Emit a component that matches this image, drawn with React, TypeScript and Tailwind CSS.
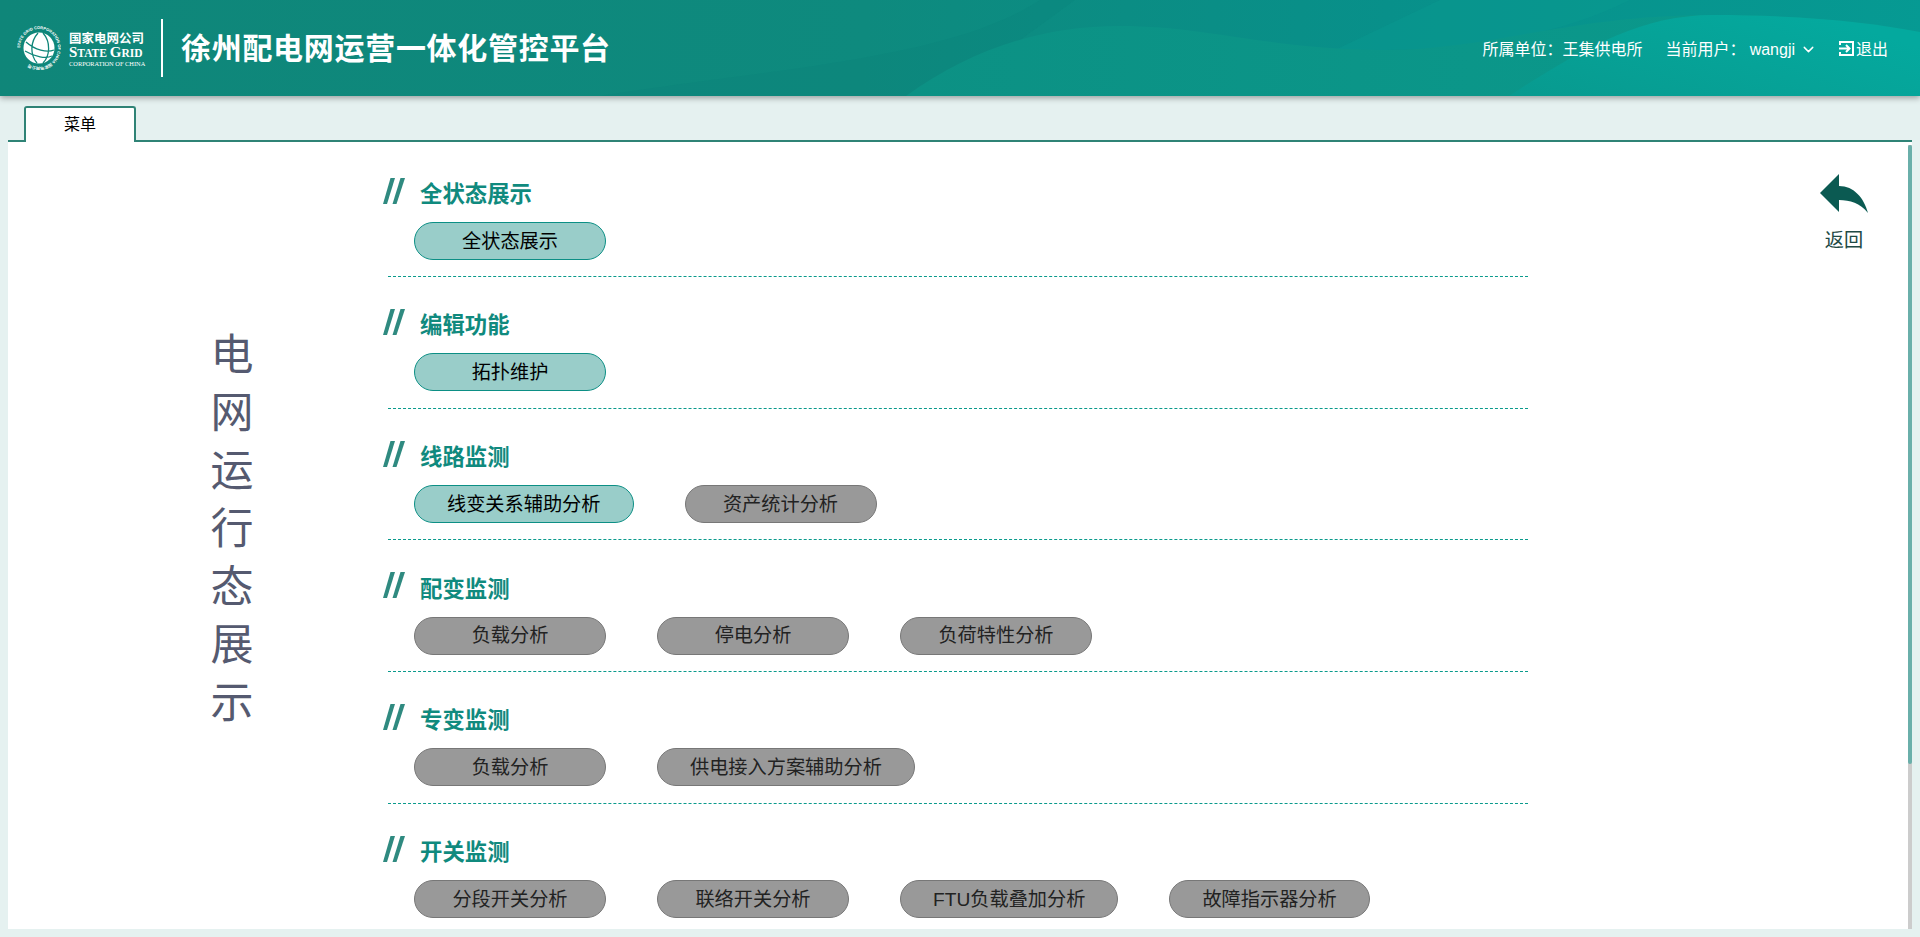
import React from 'react';
import { ChevronDown } from 'lucide-react';

type Item = { label: string; active?: boolean };
type Group = { title: string; items: Item[] };

const groups: Group[] = [
  { title: '全状态展示', items: [{ label: '全状态展示', active: true }] },
  { title: '编辑功能', items: [{ label: '拓扑维护', active: true }] },
  { title: '线路监测', items: [{ label: '线变关系辅助分析', active: true }, { label: '资产统计分析' }] },
  { title: '配变监测', items: [{ label: '负载分析' }, { label: '停电分析' }, { label: '负荷特性分析' }] },
  { title: '专变监测', items: [{ label: '负载分析' }, { label: '供电接入方案辅助分析' }] },
  { title: '开关监测', items: [{ label: '分段开关分析' }, { label: '联络开关分析' }, { label: 'FTU负载叠加分析' }, { label: '故障指示器分析' }] },
];

function HeaderWaves() {
  return (
    <svg className="absolute inset-0 h-full w-full" viewBox="0 0 1920 96" preserveAspectRatio="none">
      <defs>
        <linearGradient id="waveA" x1="0" x2="1" y1="0" y2="0">
          <stop offset="0" stopColor="#0c9184" />
          <stop offset="1" stopColor="#0a9a8d" />
        </linearGradient>
        <linearGradient id="waveB" x1="0" x2="1" y1="1" y2="0.4">
          <stop offset="0" stopColor="#089a8f" />
          <stop offset="0.6" stopColor="#06a398" />
          <stop offset="1" stopColor="#04a99e" />
        </linearGradient>
      </defs>
      <path d="M1040 0 L1075 0 L1020 40 L906 96 L600 96 C760 70 950 60 1040 0 Z" fill="#0a7f78" opacity="0.2" />
      <path d="M1440 0 L1630 0 C1560 35 1470 50 1385 50 L1335 50 Z" fill="#0a9a90" opacity="0.4" />
      <path d="M906 96 C970 50 1040 26 1120 26 C1210 26 1270 50 1385 50 C1490 50 1570 15 1712 15 C1800 15 1870 22 1920 32 L1920 96 Z" fill="url(#waveA)" />
      <path d="M1509 96 C1580 50 1640 15 1712 15 C1800 15 1870 22 1920 32 L1920 96 Z" fill="url(#waveB)" />
    </svg>
  );
}

function Logo() {
  return (
    <div className="flex items-center text-white">
      <svg className="ml-[17px] h-[44px] w-[44px]" viewBox="0 0 44 44">
        <defs>
          <path id="ring" d="M22 22 m-19 0 a19 19 0 1 1 38 0 a19 19 0 1 1 -38 0" />
        </defs>
        <text fill="#fff" fontSize="4" fontWeight="700" fontFamily="Liberation Sans, sans-serif">
          <textPath href="#ring">STATE GRID CORPORATION OF CHINA 国家电网公司</textPath>
        </text>
        <circle cx="22" cy="22" r="15.5" fill="#fff" />
        <path d="M9 16 C18 24 30 27 37 24 M8 25 C18 31 29 33 35 30 M21 7 C13 16 13 29 20 37 M26 7 C34 16 33 30 26 37" fill="none" stroke="#0f8679" strokeWidth="1.3" />
      </svg>
      <div className="ml-[8px] flex w-[76px] flex-col pt-[2px]">
        <div className="text-[12.5px] leading-[14px] font-bold whitespace-nowrap">国家电网公司</div>
        <div className="mt-[1px] font-['Liberation_Serif',serif] text-[11.5px] leading-[11px] font-bold whitespace-nowrap">
          <span className="text-[15px]">S</span>TATE <span className="text-[15px]">G</span>RID
        </div>
        <div className="mt-[1px] font-['Liberation_Serif',serif] text-[6.4px] leading-[7px] whitespace-nowrap">CORPORATION OF CHINA</div>
      </div>
      <div className="ml-[16px] h-[58px] w-[2px] bg-white" />
      <h1 className="ml-[18px] pt-[1px] text-[30px] leading-none font-bold tracking-[0.7px] whitespace-nowrap">徐州配电网运营一体化管控平台</h1>
    </div>
  );
}

function ExitIcon() {
  return (
    <svg className="h-[17px] w-[17px]" viewBox="0 0 17 17" fill="none" stroke="#fff" strokeWidth="2">
      <path d="M2 5 V2 H15 V15 H2 V12" />
      <path d="M1 8.5 H11 M8 5 L11.5 8.5 L8 12" />
    </svg>
  );
}

function Header() {
  return (
    <header className="relative z-10 flex h-[96px] shrink-0 items-center justify-between overflow-hidden bg-[linear-gradient(95deg,#0f8679_0%,#0e8a7e_45%,#08908a_72%,#069a93_100%)] shadow-[0_2px_6px_rgba(0,0,0,0.35)]">
      <HeaderWaves />
      <div className="relative">
        <Logo />
      </div>
      <div className="relative mr-[32px] flex items-center pt-[3px] text-[16px] leading-none text-white">
        <span>所属单位：王集供电所</span>
        <span className="ml-[23px]">当前用户：</span>
        <span className="ml-[4px]">wangji</span>
        <ChevronDown className="ml-[5px] h-[17px] w-[17px]" strokeWidth={2} />
        <span className="ml-[21px] -mt-[3px]"><ExitIcon /></span>
        <span className="ml-[1px]">退出</span>
      </div>
    </header>
  );
}

function Pill({ label, active }: Item) {
  return (
    <button
      className={
        active
          ? 'h-[38px] min-w-[192px] rounded-[19px] border border-[#0c8f85] bg-[#99cdc9] px-[32px] pt-[1px] text-[19.2px] leading-none whitespace-nowrap text-black'
          : 'h-[38px] min-w-[192px] rounded-[19px] border border-[#777777] bg-[#999999] px-[32px] pt-[1px] text-[19.2px] leading-none whitespace-nowrap text-[#222222]'
      }
    >
      {label}
    </button>
  );
}

function Section({ title, items }: Group) {
  return (
    <section className="h-[131.6px] shrink-0 border-b border-dashed border-[#0a9a8c] pt-[31px]">
      <div className="flex h-[28px] items-center">
        <svg className="-ml-[5px] h-[26px] w-[22px]" viewBox="0 0 22 26" fill="#2f8a80">
          <path d="M0 26 L7.5 0 H12 L4 26 Z" />
          <path d="M9.5 26 L17.5 0 H22 L13.5 26 Z" />
        </svg>
        <h2 className="ml-[15px] pt-[9px] text-[22.4px] leading-none font-bold text-[#108a7e]">{title}</h2>
      </div>
      <div className="mt-[17.2px] ml-[26px] flex gap-[51px]">
        {items.map((item) => (
          <Pill key={item.label} {...item} />
        ))}
      </div>
    </section>
  );
}

export default function App() {
  return (
    <div className="flex h-[937px] w-[1920px] flex-col overflow-hidden bg-[#e5f1f0] font-['Liberation_Sans','Noto_Sans_CJK_SC',sans-serif]">
      <Header />

      <div className="flex h-[46px] shrink-0 items-end pl-[8px]">
        <div className="flex h-full w-[1904px] items-end border-b-2 border-[#2f8376] pl-[16px]">
          <div className="-mb-[2px] flex h-[36px] w-[112px] items-center justify-center rounded-t-[3px] border-2 border-b-0 border-[#2f8376] bg-white text-[16px] text-black">
            菜单
          </div>
        </div>
      </div>

      <main className="mr-[8px] ml-[8px] flex h-[787px] shrink-0 overflow-hidden bg-white">
        <div className="ml-[202.5px] w-[177.5px] shrink-0 pt-[184px]">
          <div className="flex w-[43px] flex-col text-[43px] leading-[58px] text-[#555a70]">
            {'电网运行态展示'.split('').map((c) => (
              <span key={c}>{c}</span>
            ))}
          </div>
        </div>

        <div className="flex w-[1140px] shrink-0 flex-col pt-[3.6px]">
          {groups.map((g) => (
            <Section key={g.title} {...g} />
          ))}
        </div>

        <div className="flex w-[380px] shrink-0 flex-col items-center pt-[32px] pl-[252px] text-[#0b5a52]">
          <svg className="h-[39px] w-[48px] shrink-0" viewBox="0 0 48 39" fill="#0b5a52">
            <path d="M0 19 L19 0 V12 C34 12 44 24 48 39 C40 29 30 26 19 26 V38 Z" />
          </svg>
          <span className="mt-[14px] text-[19.2px] leading-[28px] text-[#1e4a45]">返回</span>
        </div>

        <div className="mt-[3px] flex h-[784px] w-[4px] shrink-0 flex-col bg-[#cccccc]">
          <div className="h-[619px] rounded-[2px] bg-[#6aafaa]" />
        </div>
      </main>
    </div>
  );
}
